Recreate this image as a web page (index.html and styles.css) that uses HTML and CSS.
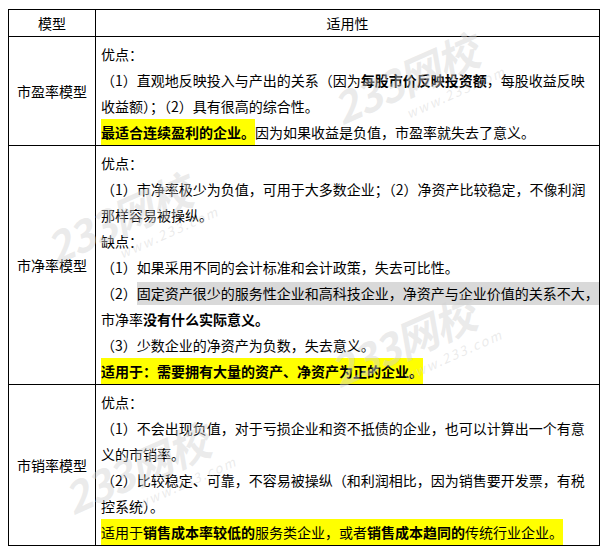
FILE: index.html
```html
<!DOCTYPE html>
<html lang="zh-CN">
<head>
<meta charset="utf-8">
<title>估值模型适用性</title>
<link rel="stylesheet" href="styles.css">
</head>
<body>
<div class="sheet">
  <table class="models">
    <colgroup><col class="c-model"><col class="c-use"></colgroup>
    <thead>
      <tr><th>模型</th><th>适用性</th></tr>
    </thead>
    <tbody>
      <tr>
        <td class="name">市盈率模型</td>
        <td class="desc">
          <p>优点：</p>
          <p>（1）直观地反映投入与产出的关系（因为<b>每股市价反映投资额</b>，每股收益反映<br>收益额）；（2）具有很高的综合性。</p>
          <p><span class="hl-y"><b>最适合连续盈利的企业。</b></span>因为如果收益是负值，市盈率就失去了意义。</p>
        </td>
      </tr>
      <tr>
        <td class="name">市净率模型</td>
        <td class="desc">
          <p>优点：</p>
          <p>（1）市净率极少为负值，可用于大多数企业；（2）净资产比较稳定，不像利润<br>那样容易被操纵。</p>
          <p>缺点：</p>
          <p>（1）如果采用不同的会计标准和会计政策，失去可比性。</p>
          <p class="nowrap">（2）<span class="hl-g">固定资产很少的服务性企业和高科技企业，净资产与企业价值的关系不大，</span><br>市净率<b>没有什么实际意义。</b></p>
          <p>（3）少数企业的净资产为负数，失去意义。</p>
          <p><span class="hl-y"><b>适用于：需要拥有大量的资产、净资产为正的企业。</b></span></p>
        </td>
      </tr>
      <tr>
        <td class="name">市销率模型</td>
        <td class="desc">
          <p>优点：</p>
          <p>（1）不会出现负值，对于亏损企业和资不抵债的企业，也可以计算出一个有意<br>义的市销率。</p>
          <p>（2）比较稳定、可靠，不容易被操纵（和利润相比，因为销售要开发票，有税<br>控系统）。</p>
          <p><span class="hl-y">适用于<b>销售成本率较低的</b>服务类企业，或者<b>销售成本趋同的</b>传统行业企业。</span></p>
        </td>
      </tr>
    </tbody>
  </table>

  <div class="wm wm-a"><span class="wm-big">233网校</span><span class="wm-url">www.233.com</span></div>
  <div class="wm wm-b"><span class="wm-big">233网校</span><span class="wm-url">www.233.com</span></div>
  <div class="wm wm-c"><span class="wm-big">233网校</span><span class="wm-url">www.233.com</span></div>
  <div class="wm wm-d"><span class="wm-big">233网校</span><span class="wm-url">www.233.com</span></div>
</div>
</body>
</html>
```

FILE: styles.css
```css
body {
  margin: 9px 8px;
  background: #fff;
  color: #000;
  font-family: "Noto Sans CJK SC", "Microsoft YaHei", sans-serif;
  font-size: 14px;
}

.sheet {
  position: relative;
  width: 592px;
}

.models {
  border-collapse: collapse;
  table-layout: fixed;
  width: 592px;
}

.c-model {
  width: 87px;
}

.models th,
.models td {
  border: 1px solid #000;
  padding: 0;
}

.models th {
  font-weight: normal;
  line-height: 26px;
  text-align: center;
}

.name {
  text-align: center;
  vertical-align: middle;
  line-height: 26px;
}

.models .desc {
  padding: 4px 0 0 5px;
  line-height: 26px;
  vertical-align: top;
}

.desc p {
  margin: 0;
}

.desc .nowrap {
  white-space: nowrap;
}

.desc b {
  font-weight: bold;
}

.hl-y {
  display: inline-block;
  height: 26px;
  background: #ffff00;
}

.hl-g {
  background: #d9d9d9;
  padding: 1px 0 2px;
}

/* watermark overlay */
.wm {
  position: absolute;
  pointer-events: none;
  transform: rotate(-24deg);
  transform-origin: center;
  color: rgba(210, 210, 210, 0.45);
  white-space: nowrap;
}

.wm-big {
  display: block;
  font-size: 42px;
  line-height: 46px;
  font-weight: bold;
  font-style: italic;
  letter-spacing: -1px;
}

.wm-url {
  position: absolute;
  left: 64px;
  top: 50px;
  font-size: 13px;
  line-height: 14px;
  letter-spacing: 2px;
  font-style: italic;
}

.wm-a { left: 320px; top: 46px; }
.wm-b { left: 33px; top: 186px; }
.wm-c { left: 317px; top: 309px; }
.wm-d { left: 51px; top: 436px; }
```
